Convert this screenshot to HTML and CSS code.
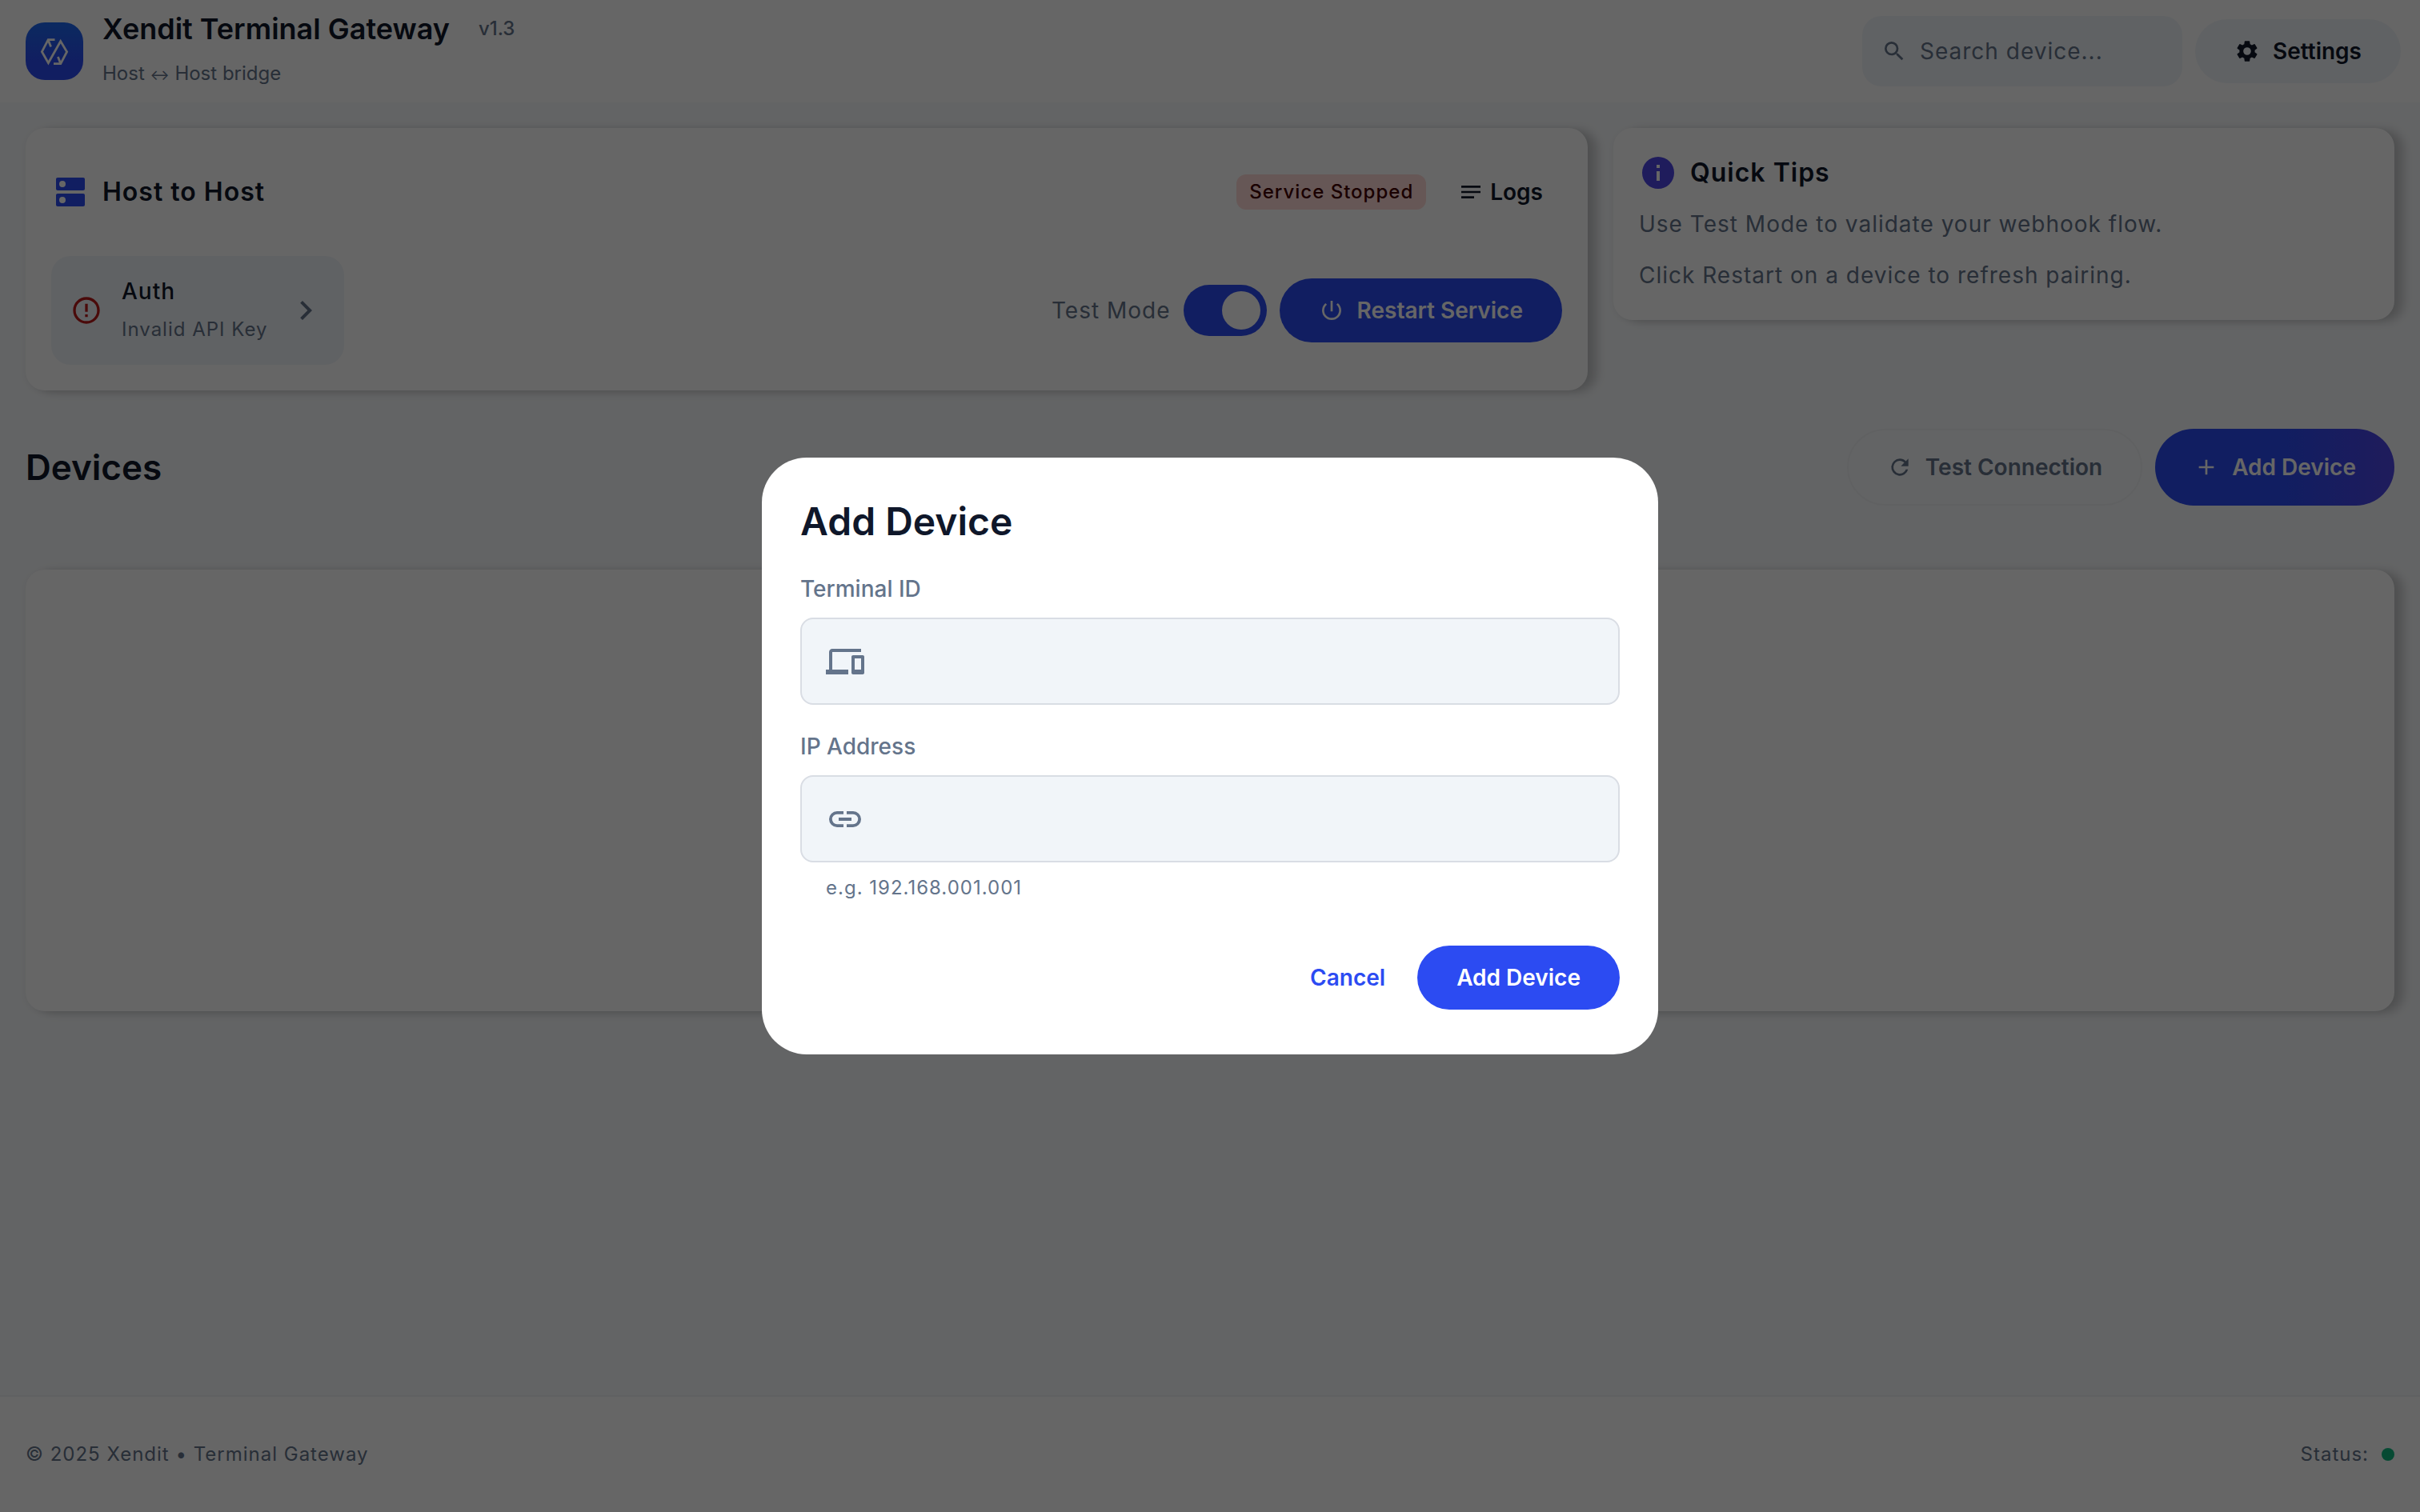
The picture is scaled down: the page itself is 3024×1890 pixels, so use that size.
FILE: index.html
```
<!DOCTYPE html>
<html lang="en">
<head>
  <meta charset="utf-8">
  <meta name="viewport" content="width=device-width, initial-scale=1">
  <title>Xendit Terminal Gateway</title>
  <link rel="stylesheet" href="styles.css">
</head>
<body>
  <header class="topbar">
    <div class="brand">
      <svg class="brand-logo" viewBox="0 0 72 72" aria-hidden="true">
        <defs>
          <linearGradient id="logo-fill" x1="0" y1="0" x2="0" y2="1">
            <stop offset="0" stop-color="#1d69f0"/>
            <stop offset="0.7" stop-color="#2c4bf2"/>
            <stop offset="1" stop-color="#2c4bf2"/>
          </linearGradient>
        </defs>
        <rect width="72" height="72" rx="24" fill="url(#logo-fill)"/>
        <g fill="none" stroke="#fff" stroke-width="2.8">
          <path d="M36.5 21.7H28.2L20.4 36.7 28.4 50.6 43.7 23.6 51.6 36.7 43.8 51.6H35"/>
          <path d="M28.4 22.5 31.6 30.5M43.6 51 40.4 43"/>
        </g>
      </svg>
      <div class="brand-text">
        <div class="brand-title">
          <h1>Xendit Terminal Gateway</h1>
          <span class="version">v1.3</span>
        </div>
        <p class="brand-sub">Host <span class="arrow">↔</span> Host bridge</p>
      </div>
    </div>
    <div class="topbar-actions">
      <label class="search">
        <svg class="icon-sm" viewBox="0 0 24 24" aria-hidden="true"><path d="M15.5 14h-.79l-.28-.27A6.47 6.47 0 0 0 16 9.5 6.5 6.5 0 1 0 9.5 16c1.61 0 3.09-.59 4.23-1.57l.27.28v.79l5 4.99L20.49 19l-4.99-5zm-6 0a4.5 4.5 0 1 1 0-9 4.5 4.5 0 0 1 0 9z"/></svg>
        <input type="search" placeholder="Search device..." aria-label="Search device">
      </label>
      <button class="btn btn-soft" type="button">
        <svg class="icon-sm" viewBox="0 0 24 24" aria-hidden="true"><path d="M19.14 12.94c.04-.3.06-.61.06-.94 0-.32-.02-.64-.07-.94l2.03-1.58a.49.49 0 0 0 .12-.61l-1.92-3.32a.49.49 0 0 0-.59-.22l-2.39.96c-.5-.38-1.03-.7-1.62-.94l-.36-2.54a.48.48 0 0 0-.48-.41h-3.84a.47.47 0 0 0-.47.41l-.36 2.54c-.59.24-1.13.57-1.62.94l-2.39-.96a.48.48 0 0 0-.59.22L2.74 8.87a.47.47 0 0 0 .12.61l2.03 1.58c-.05.3-.09.63-.09.94s.02.64.07.94l-2.03 1.58a.49.49 0 0 0-.12.61l1.92 3.32c.12.22.37.29.59.22l2.39-.96c.5.38 1.03.7 1.62.94l.36 2.54c.05.24.24.41.48.41h3.84c.24 0 .44-.17.47-.41l.36-2.54c.59-.24 1.13-.56 1.62-.94l2.39.96c.22.08.47 0 .59-.22l1.92-3.32a.47.47 0 0 0-.12-.61l-2.01-1.58zM12 15.6a3.6 3.6 0 1 1 0-7.2 3.6 3.6 0 0 1 0 7.2z"/></svg>
        Settings
      </button>
    </div>
  </header>

  <main class="content">
    <div class="overview">
      <section class="card host-card">
        <div class="card-row card-head">
          <div class="card-title">
            <svg class="icon-lg accent" viewBox="0 0 24 24" aria-hidden="true"><path d="M20 13H4c-.55 0-1 .45-1 1v6c0 .55.45 1 1 1h16c.55 0 1-.45 1-1v-6c0-.55-.45-1-1-1zM7 19a2 2 0 1 1 0-4 2 2 0 0 1 0 4zM20 3H4c-.55 0-1 .45-1 1v6c0 .55.45 1 1 1h16c.55 0 1-.45 1-1V4c0-.55-.45-1-1-1zM7 9a2 2 0 1 1 0-4 2 2 0 0 1 0 4z"/></svg>
            <h2>Host to Host</h2>
          </div>
          <div class="card-tools">
            <span class="chip">Service Stopped</span>
            <button class="btn btn-text btn-dark" type="button">
              <svg class="icon-sm" viewBox="0 0 24 24" aria-hidden="true"><path d="M3 18h12v-2H3v2zM3 6v2h18V6H3zm0 7h18v-2H3v2z"/></svg>
              Logs
            </button>
          </div>
        </div>
        <div class="card-row">
          <button class="auth-tile" type="button">
            <svg class="icon-md danger" viewBox="0 0 24 24" aria-hidden="true"><path d="M11 15h2v2h-2zm0-8h2v6h-2zm.99-5C6.47 2 2 6.48 2 12s4.47 10 9.99 10C17.52 22 22 17.52 22 12S17.52 2 11.99 2zM12 20a8 8 0 1 1 0-16 8 8 0 0 1 0 16z"/></svg>
            <span class="auth-text">
              <span class="auth-name">Auth</span>
              <span class="auth-state">Invalid API Key</span>
            </span>
            <svg class="icon-lg muted" viewBox="0 0 24 24" aria-hidden="true"><path d="M10 6 8.59 7.41 13.17 12l-4.58 4.59L10 18l6-6z"/></svg>
          </button>
          <div class="service-controls">
            <label class="test-mode">Test Mode
              <input class="switch" type="checkbox" role="switch" checked>
            </label>
            <button class="btn btn-primary" type="button">
              <svg class="icon-sm" viewBox="0 0 24 24" aria-hidden="true"><path d="M13 3h-2v10h2V3zm4.83 2.17-1.42 1.42A6.92 6.92 0 0 1 19 12a7 7 0 1 1-11.42-5.42L6.17 5.17A8.93 8.93 0 0 0 3 12a9 9 0 0 0 18 0c0-2.74-1.23-5.18-3.17-6.83z"/></svg>
              Restart Service
            </button>
          </div>
        </div>
      </section>

      <aside class="card tips-card">
        <div class="card-title">
          <svg class="icon-lg accent-violet" viewBox="0 0 24 24" aria-hidden="true"><path d="M12 2a10 10 0 1 0 0 20 10 10 0 0 0 0-20zm1 15h-2v-6h2v6zm0-8h-2V7h2v2z"/></svg>
          <h2>Quick Tips</h2>
        </div>
        <p>Use Test Mode to validate your webhook flow.</p>
        <p>Click Restart on a device to refresh pairing.</p>
      </aside>
    </div>

    <div class="devices-head">
      <h2>Devices</h2>
      <div class="devices-actions">
        <button class="btn btn-tall btn-outline" type="button">
          <svg class="icon-sm" viewBox="0 0 24 24" aria-hidden="true"><path d="M17.65 6.35A7.96 7.96 0 0 0 12 4a8 8 0 1 0 7.73 10h-2.08A6 6 0 1 1 12 6c1.66 0 3.14.69 4.22 1.78L13 11h7V4l-2.35 2.35z"/></svg>
          Test Connection
        </button>
        <button class="btn btn-tall btn-gradient" type="button">
          <svg class="icon-sm" viewBox="0 0 24 24" aria-hidden="true"><path d="M19 13h-6v6h-2v-6H5v-2h6V5h2v6h6v2z"/></svg>
          Add Device
        </button>
      </div>
    </div>

    <section class="card device-list" aria-label="Device list"></section>
  </main>

  <footer class="footer">
    <span>© 2025 Xendit • Terminal Gateway</span>
    <span class="status">Status: <i class="status-dot"></i></span>
  </footer>

  <div class="overlay">
    <dialog class="modal" open aria-labelledby="modal-title">
      <form method="dialog">
        <h2 id="modal-title">Add Device</h2>
        <div class="field">
          <label for="terminal-id">Terminal ID</label>
          <div class="field-box">
            <svg class="icon-lg" viewBox="0 0 24 24" aria-hidden="true"><path d="M4 6h18V4H4c-1.1 0-2 .9-2 2v11H0v3h14v-3H4V6zm19 2h-6c-.55 0-1 .45-1 1v10c0 .55.45 1 1 1h6c.55 0 1-.45 1-1V9c0-.55-.45-1-1-1zm-1 9h-4v-7h4v7z"/></svg>
            <input id="terminal-id" type="text">
          </div>
        </div>
        <div class="field">
          <label for="ip-address">IP Address</label>
          <div class="field-box">
            <svg class="icon-lg" viewBox="0 0 24 24" aria-hidden="true"><path d="M3.9 12A3.1 3.1 0 0 1 7 8.9h4V7H7a5 5 0 0 0 0 10h4v-1.9H7A3.1 3.1 0 0 1 3.9 12zM8 13h8v-2H8v2zm9-6h-4v1.9h4a3.1 3.1 0 0 1 0 6.2h-4V17h4a5 5 0 0 0 0-10z"/></svg>
            <input id="ip-address" type="text" aria-describedby="ip-hint">
          </div>
          <p class="hint" id="ip-hint">e.g. 192.168.001.001</p>
        </div>
        <div class="modal-actions">
          <button class="btn btn-text btn-link" type="button">Cancel</button>
          <button class="btn btn-primary" type="button">Add Device</button>
        </div>
      </form>
    </dialog>
  </div>
</body>
</html>
```
FILE: styles.css
```
:root {
  --ink: #0f172a;
  --muted: #64748b;
  --primary: #2c4bf2;
  --violet: #4f46e5;
  --page: #f8fafc;
  --soft: #f1f5f9;
  --line: #d9dde4;
  --tracking: 1px;
}

* {
  box-sizing: border-box;
}

body {
  margin: 0;
  min-height: 100vh;
  display: flex;
  flex-direction: column;
  background: var(--page);
  color: var(--ink);
  font: 400 28px/40px Inter, "Liberation Sans", sans-serif;
}

h1,
h2,
p {
  margin: 0;
}

button,
input {
  font: inherit;
  color: inherit;
}

svg {
  display: block;
  flex: none;
  fill: currentColor;
}

.icon-sm { width: 32px; height: 32px; }
.icon-md { width: 40px; height: 40px; }
.icon-lg { width: 48px; height: 48px; }

.accent { color: var(--primary); }
.accent-violet { color: var(--violet); }
.danger { color: #ba1a1a; }
.muted { color: var(--muted); }

/* Buttons */

.btn {
  display: inline-flex;
  align-items: center;
  justify-content: center;
  gap: 16px;
  height: 80px;
  padding: 0 49px;
  border: 0;
  border-radius: 48px;
  background: none;
  font-weight: 600;
  white-space: nowrap;
}

.btn-tall {
  height: 96px;
  padding: 0 48px;
}

.btn-soft { background: var(--soft); }
.btn-primary { background: var(--primary); color: #fff; }

.btn-outline {
  border: 2px solid #f1f3f6;
  color: var(--muted);
}

.btn-gradient {
  background: linear-gradient(90deg, var(--primary) 55%, var(--violet));
  color: #fff;
}

.btn-text { padding: 0 24px; gap: 8px; }
.btn-dark { color: var(--ink); }
.btn-link { color: var(--primary); }

/* Top bar */

.topbar {
  display: flex;
  align-items: center;
  justify-content: space-between;
  padding: 16px 24px 16px 32px;
  background: #fff;
}

.brand,
.brand-title,
.topbar-actions {
  display: flex;
  align-items: center;
}

.brand { gap: 24px; }
.brand-title { gap: 36px; }
.topbar-actions { gap: 16px; }

.brand-logo {
  width: 72px;
  height: 72px;
}

.brand-text {
  display: flex;
  flex-direction: column;
  gap: 16px;
}

h1 {
  font-size: 36px;
  line-height: 40px;
  font-weight: 600;
}

.version,
.brand-sub {
  font-size: 24px;
  color: var(--muted);
}

.version { font-weight: 500; }

.arrow {
  font-size: 18px;
  line-height: 1;
}

.search {
  display: flex;
  align-items: center;
  gap: 16px;
  width: 400px;
  height: 88px;
  padding: 0 24px;
  border-radius: 24px;
  background: var(--soft);
  color: var(--muted);
}

.search input {
  flex: 1;
  min-width: 0;
  padding: 0;
  border: 0;
  outline: 0;
  background: none;
  letter-spacing: var(--tracking);
}

.search input::placeholder {
  color: var(--muted);
  opacity: 1;
}

/* Cards */

.content {
  flex: 1;
  padding: 32px;
}

.overview {
  display: grid;
  grid-template-columns: 2fr 1fr;
  align-items: start;
  gap: 32px;
}

.card {
  padding: 32px;
  border-radius: 24px;
  background: #fff;
  letter-spacing: var(--tracking);
  box-shadow: 12px 2px 12px rgba(0, 0, 0, 0.18), 0 2px 8px rgba(0, 0, 0, 0.06);
}

.card h2 {
  font-size: 32px;
  font-weight: 600;
}

.host-card {
  display: flex;
  flex-direction: column;
  gap: 32px;
}

.card-row,
.card-title,
.card-tools,
.service-controls,
.test-mode {
  display: flex;
  align-items: center;
  gap: 16px;
}

.card-row { justify-content: space-between; }
.card-head { min-height: 96px; }

.chip {
  padding: 4px 16px;
  border-radius: 12px;
  background: #ffdad6;
  color: #410002;
  font-size: 24px;
  line-height: 36px;
  font-weight: 500;
}

.auth-tile {
  display: flex;
  align-items: center;
  gap: 24px;
  padding: 24px;
  border: 0;
  border-radius: 24px;
  background: var(--soft);
  text-align: left;
  letter-spacing: var(--tracking);
}

.auth-text {
  display: flex;
  flex-direction: column;
  gap: 8px;
}

.auth-name { font-weight: 500; }

.auth-state {
  font-size: 24px;
  color: var(--muted);
}

.test-mode { color: var(--muted); }

.switch {
  appearance: none;
  display: flex;
  align-items: center;
  justify-content: flex-end;
  width: 104px;
  height: 64px;
  margin: 0;
  padding: 8px;
  border-radius: 32px;
  background: var(--primary);
}

.switch::before {
  content: "";
  width: 48px;
  height: 48px;
  border-radius: 50%;
  background: #fff;
}

.switch:not(:checked) {
  justify-content: flex-start;
  background: var(--muted);
}

.tips-card {
  display: flex;
  flex-direction: column;
  gap: 16px;
}

.tips-card p {
  line-height: 48px;
  color: var(--muted);
}

/* Devices */

.devices-head {
  display: flex;
  align-items: center;
  justify-content: space-between;
  margin: 48px 0 80px;
}

.devices-head h2 {
  font-size: 44px;
  line-height: 56px;
  font-weight: 600;
}

.devices-actions {
  display: flex;
  gap: 16px;
}

.device-list { min-height: 552px; }

/* Footer */

.footer {
  display: flex;
  align-items: center;
  justify-content: space-between;
  padding: 52px 32px;
  border-top: 2px solid #f0f2f6;
  background: #fff;
  color: var(--muted);
  font-size: 24px;
  letter-spacing: var(--tracking);
}

.status {
  display: flex;
  align-items: center;
  gap: 16px;
}

.status-dot {
  width: 16px;
  height: 16px;
  border-radius: 50%;
  background: #10b981;
}

/* Modal */

.overlay {
  position: fixed;
  inset: 0;
  display: flex;
  align-items: center;
  justify-content: center;
  padding: 32px;
  background: rgba(0, 0, 0, 0.6);
}

.modal {
  position: static;
  width: 1120px;
  max-width: 100%;
  margin: 0;
  padding: 48px 48px 56px;
  border: 0;
  border-radius: 56px;
  background: #fff;
  color: var(--ink);
}

.modal form {
  display: flex;
  flex-direction: column;
  gap: 32px;
}

.modal h2 {
  font-size: 48px;
  line-height: 64px;
  font-weight: 600;
}

.field {
  display: flex;
  flex-direction: column;
  gap: 16px;
  color: var(--muted);
}

.field label { font-weight: 500; }

.field-box {
  display: flex;
  align-items: center;
  gap: 24px;
  height: 109px;
  padding: 0 30px;
  border: 2px solid var(--line);
  border-radius: 16px;
  background: var(--soft);
}

.field-box input {
  flex: 1;
  min-width: 0;
  height: 100%;
  padding: 0;
  border: 0;
  outline: 0;
  background: none;
  color: var(--ink);
}

.hint {
  padding-left: 32px;
  font-size: 24px;
  line-height: 32px;
  letter-spacing: var(--tracking);
}

.modal-actions {
  display: flex;
  justify-content: flex-end;
  gap: 16px;
  margin-top: 24px;
}
```
